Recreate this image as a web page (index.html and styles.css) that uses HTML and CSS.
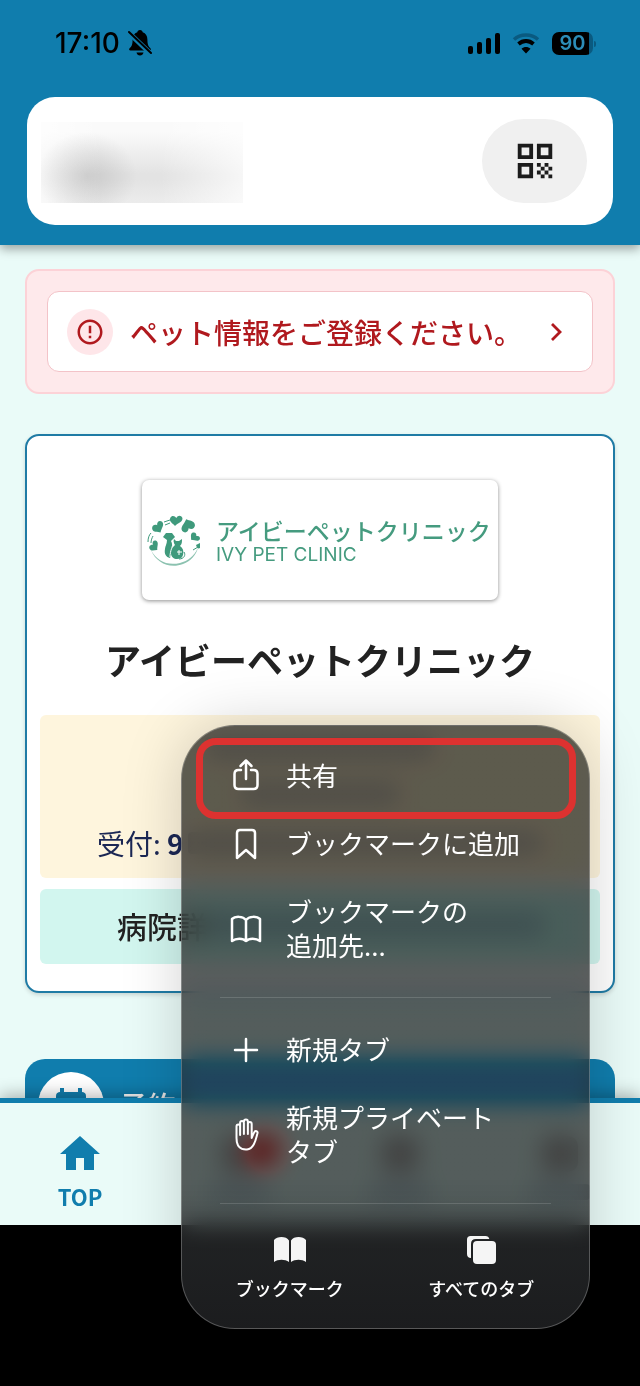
FILE: index.html
```html
<!DOCTYPE html>
<html lang="ja">
<head>
    <meta charset="UTF-8">
    <meta name="viewport" content="width=device-width, initial-scale=1.0">
    <title>アイビーペットクリニック</title>
    <link rel="stylesheet" href="styles.css">
</head>
<body>
    <header class="header">
        <div class="status-bar">
            <div class="status-left">
                <span class="clock">17:10</span>
                <svg width="24" height="28" viewBox="0 0 24 28" aria-hidden="true">
                    <path d="M12 1c1.600 0 2.600 1 2.700 2.300 3.100 1 4.700 3.600 4.700 7.200 0 5.200 1 7 3 8.800.900.900.500 2.200-.900 2.200H2.500c-1.400 0-1.800-1.300-.900-2.200 2-1.800 3-3.600 3-8.800 0-3.600 1.600-6.200 4.700-7.200C9.400 2 10.400 1 12 1zM8.500 23.500h7c-.400 1.900-1.700 3-3.500 3s-3.100-1.100-3.500-3z"/>
                    <path d="M0 3L23 25" stroke="#107dad" stroke-width="5"/>
                    <path d="M1 3L23 24" stroke="#000" stroke-width="2" stroke-linecap="round"/>
                </svg>
            </div>
            <div class="status-right">
                <svg width="32" height="26" viewBox="0 0 32 26" aria-hidden="true">
                    <rect x="0" y="16" width="5" height="8" rx="2"/>
                    <rect x="9" y="12" width="5" height="12" rx="2"/>
                    <rect x="18" y="8" width="5" height="16" rx="2"/>
                    <rect x="27" y="3" width="5" height="21" rx="2"/>
                </svg>
                <svg width="28" height="26" viewBox="0 0 28 26" fill="none" aria-hidden="true">
                    <path d="M2 9.500C8.500 3.500 19.500 3.500 26 9.500" stroke="#0a5a80" stroke-width="3.500"/>
                    <path d="M6.500 14C11 10 17 10 21.500 14" stroke="#000" stroke-width="3.800"/>
                    <path d="M14 23.500l-4.500-4.700c2.500-2.400 6.500-2.400 9 0z" fill="#000"/>
                </svg>
                <span class="battery">90</span>
            </div>
        </div>
        <div class="account">
            <div class="account-name"></div>
            <button class="qr-button" type="button" aria-label="QRコード">
                <svg width="46" height="48" viewBox="0 0 24 24" fill="#1c1c1c">
                    <path d="M3 11h8V3H3v8zm2-6h4v4H5V5zM3 21h8v-8H3v8zm2-6h4v4H5v-4zM13 3v8h8V3h-8zm6 6h-4V5h4v4zM19 19h2v2h-2zM13 13h2v2h-2zM15 15h2v2h-2zM13 17h2v2h-2zM15 19h2v2h-2zM17 17h2v2h-2zM17 13h2v2h-2zM19 15h2v2h-2z"/>
                </svg>
            </button>
        </div>
    </header>

    <main class="main">
        <div class="alert">
            <a class="alert-link" href="#pet">
                <span class="alert-icon">
                    <svg width="30" height="30" viewBox="0 0 24 24" fill="#b0191e">
                        <path d="M11 15h2v2h-2zm0-8h2v6h-2zm1-5C6.500 2 2 6.500 2 12s4.500 10 10 10 10-4.500 10-10S17.500 2 12 2zm0 18c-4.400 0-8-3.600-8-8s3.600-8 8-8 8 3.600 8 8-3.600 8-8 8z"/>
                    </svg>
                </span>
                <span class="alert-text">ペット情報をご登録ください。</span>
                <svg width="24" height="24" viewBox="0 0 24 24" fill="none" stroke="#b0191e" stroke-width="2.800">
                    <path d="M8 4l8 8-8 8"/>
                </svg>
            </a>
        </div>

        <section class="clinic">
            <div class="logo">
                <svg class="logo-mark" width="54" height="54" viewBox="0 0 54 54" fill="#3f9a7c" aria-hidden="true">
                    <defs>
                        <path id="leaf" d="M0 6C-2 4-7 3-6-1c1-3 4-3 6-1 1-3 4-4 6-1 1 4-3 5-6 9z"/>
                    </defs>
                    <path d="M4 36C9 49 23 55 36 50c8-3 13-9 15-16-4 8-10 13-18 15C20 52 10 47 4 36z" opacity=".6"/>
                    <path d="M1 28c0-4 1-7 3-9M17 8l6-2M18 11l5-2M4 29c0-3 1-5 2-7M46 36l5-3" fill="none" stroke="#3f9a7c"/>
                    <use href="#leaf" transform="translate(11 13) rotate(-25)"/>
                    <use href="#leaf" transform="translate(29 6) rotate(10)"/>
                    <use href="#leaf" transform="translate(41 12) rotate(165) scale(1.150)"/>
                    <use href="#leaf" transform="translate(48 23) rotate(55) scale(.800)"/>
                    <use href="#leaf" transform="translate(7 32) rotate(-40) scale(.850)"/>
                    <path d="M49 31l4-2v5c-2 1-3 0-4-3z"/>
                    <path d="M16 23l3-4h6l3 4-4 4c2 4 2 9-1 17-4-1-6-4-5-9 0-3 2-5 2-9z"/>
                    <path d="M27 25l2 2h3l3-2c0 3 0 5-2 7 3 2 4 5 3 9-1 3-3 4-6 4s-6-2-6-6 2-6 4-8c-1-2-2-3-1-6z"/>
                    <path d="M32 45c5 0 7-4 5-7" fill="none" stroke="#3f9a7c"/>
                    <path d="M26 28c0 5-3 8-3 15M32 36v5M30 38h5" fill="none" stroke="#fff"/>
                </svg>
                <div class="logo-text">
                    <span class="logo-ja">アイビーペットクリニック</span>
                    <span class="logo-en">IVY PET CLINIC</span>
                </div>
            </div>
            <h1 class="clinic-name">アイビーペットクリニック</h1>
            <div class="hours">
                <span class="smudge smudge-wide"></span>
                <span class="smudge smudge-short"></span>
                <div class="hours-row">
                    <span>受付: <b>9</b></span>
                    <span class="smudge smudge-fill"></span>
                </div>
            </div>
            <a class="detail-link" href="#detail">
                <span>病院詳</span>
                <span class="smudge smudge-fill"></span>
            </a>
        </section>

        <a class="booking" href="#booking">
            <span class="booking-icon">
                <svg width="30" height="34" viewBox="0 0 30 34" fill="#107dad">
                    <path d="M4 0h4v4h14V0h4v4c2 0 4 1 4 4v22c0 2-1 4-4 4H4c-3 0-4-2-4-4V8c0-3 2-4 4-4z"/>
                    <path d="M4 14h22v15H4z" fill="#fff"/>
                </svg>
            </span>
            <span>予約</span>
        </a>
    </main>

    <nav class="tabs">
        <a class="tab tab-active" href="#top">
            <svg width="48" height="48" viewBox="0 0 24 24" fill="#107dad"><path d="M10 20v-6h4v6h5v-8h3L12 3 2 12h3v8z"/></svg>
            <span>TOP</span>
        </a>
        <div class="tab">
            <span class="tab-blank"><i class="badge"></i></span>
            <span class="smudge tab-label"></span>
        </div>
        <div class="tab">
            <span class="tab-blank"></span>
            <span class="smudge tab-label"></span>
        </div>
        <div class="tab">
            <span class="tab-blank"></span>
            <span class="smudge tab-label"></span>
        </div>
    </nav>

    <!-- browser long-press menu, floats over the page -->
    <div class="menu">
        <button class="menu-item highlighted" type="button">
            <svg width="34" height="34" viewBox="0 0 34 34"><path d="M12 12H9.500C7 12 5.500 13.500 5.500 16v11c0 2.500 1.500 4 4 4h15c2.500 0 4-1.500 4-4V16c0-2.500-1.500-4-4-4H22M17 21V3M11.500 8L17 2.500 22.500 8"/></svg>
            <span>共有</span>
        </button>
        <button class="menu-item" type="button">
            <svg width="34" height="34" viewBox="0 0 34 34"><path d="M8 32V7c0-2 1-3 3-3h12c2 0 3 1 3 3v25l-9-8z"/></svg>
            <span>ブックマークに追加</span>
        </button>
        <button class="menu-item" type="button">
            <svg width="34" height="34" viewBox="0 0 34 34"><path d="M17 9c-3-4-11-4-14-1v22c4-3 11-3 14 0 3-3 10-3 14 0V8c-3-3-11-3-14 1zM17 9v21"/></svg>
            <span>ブックマークの<br>追加先...</span>
        </button>
        <hr class="menu-line">
        <button class="menu-item" type="button">
            <svg width="34" height="34" viewBox="0 0 34 34"><path d="M17 7v22M6 18h22"/></svg>
            <span>新規タブ</span>
        </button>
        <button class="menu-item" type="button">
            <svg class="thin" width="34" height="34" viewBox="0 0 34 34"><path d="M7.500 21V9.500c0-2.600 3.600-2.600 3.600 0V18M11.100 16V6c0-2.700 3.800-2.700 3.800 0v11M14.900 5c0-3.300 4-3.300 4 0v12M18.900 7c0-2.800 3.800-2.800 3.800 0v14c1-2.500 1.700-4.500 2.700-6 1.200-1.700 3.600-.700 3.100 1.300C27 21 25.500 32 18 32.500 11 33 7.500 29 7.500 21"/></svg>
            <span>新規プライベート<br>タブ</span>
        </button>
        <hr class="menu-line">
        <div class="menu-footer">
            <button class="menu-tool" type="button">
                <svg width="34" height="32" viewBox="0 0 34 32"><path d="M16 6.500C13.500 2 4 2 1 6v22c4-3 11-3 15 0zM18 6.500c2.500-4.500 12-4.500 15-.500v22c-4-3-11-3-15 0z"/></svg>
                <span>ブックマーク</span>
            </button>
            <button class="menu-tool" type="button">
                <svg width="34" height="32" viewBox="0 0 34 32"><path d="M6.500 2h15c2 0 3.500 1 3.800 3H12c-3.300 0-5 1.700-5 5v14c-2.500 0-4-1.300-4-4V5.500C3 3.300 4.300 2 6.500 2z"/><rect x="9" y="7" width="23" height="23" rx="4"/></svg>
                <span>すべてのタブ</span>
            </button>
        </div>
    </div>
</body>
</html>
```
FILE: styles.css
```css
* { box-sizing: border-box; }
body {
    position: relative;
    margin: 0;
    min-height: 100vh;
    background: #000;
    font-family: "Noto Sans CJK JP", sans-serif;
    color: #222;
}
a { color: inherit; text-decoration: none; }
button { border: none; background: none; padding: 0; font-family: inherit; color: inherit; cursor: pointer; }
svg { display: block; flex: none; }

/* header */
.header {
    position: relative;
    background: #107dad;
    padding: 0 27px 20px;
    box-shadow: 0 4px 10px rgba(0, 0, 0, 0.35);
}
.status-bar {
    display: flex;
    justify-content: space-between;
    padding: 29px 20px 40px 28px;
    color: #000;
}
.status-left, .status-right { display: flex; align-items: center; height: 28px; }
.status-left { gap: 8px; }
.status-right { gap: 12px; }
.clock { font: 500 28px/28px Inter, sans-serif; }
.battery {
    position: relative;
    width: 41px;
    height: 23px;
    border-radius: 7px;
    background: linear-gradient(90deg, #000 37px, #0a5a80 37px);
    color: #2c8db8;
    font: 600 20px/23px Inter, sans-serif;
    text-align: center;
}
.battery::after {
    content: "";
    position: absolute;
    top: 9px;
    right: -3px;
    width: 2px;
    height: 6px;
    border-radius: 0 2px 2px 0;
    background: #0a5a80;
}
.account {
    display: flex;
    align-items: center;
    justify-content: space-between;
    height: 128px;
    padding: 0 26px 0 14px;
    border-radius: 28px;
    background: #fff;
}
.account-name {
    width: 202px;
    height: 81px;
    margin-top: 3px;
    background:
        radial-gradient(50px 44px at 46px 54px, rgba(0, 0, 0, 0.11), rgba(0, 0, 0, 0.06) 50%, transparent),
        linear-gradient(90deg, rgba(255, 255, 255, 0.7), transparent 60px, transparent 120px, rgba(255, 255, 255, 0.7)),
        linear-gradient(#fafafa, #fafafa 10px, #e3e3e3 52px, #e3e3e3 58px, #ececec);
}
.qr-button {
    display: flex;
    align-items: center;
    justify-content: center;
    width: 105px;
    height: 84px;
    border-radius: 42px;
    background: #f0f0f0;
}

/* page */
.main {
    padding: 24px 25px 0;
    background: #eafbf8;
}
.alert {
    padding: 20px;
    border: 2px solid #fcd2d7;
    border-radius: 14px;
    background: #fee9eb;
}
.alert-link {
    display: flex;
    align-items: center;
    gap: 17px;
    height: 81px;
    padding: 0 24px 0 19px;
    border: 1px solid #f3c3c8;
    border-radius: 12px;
    background: #fff;
}
.alert-icon {
    display: flex;
    align-items: center;
    justify-content: center;
    width: 46px;
    height: 46px;
    border-radius: 50%;
    background: #fee6e9;
}
.alert-text {
    flex: 1;
    color: #b0191e;
    font-size: 28px;
    font-weight: 500;
    line-height: 40px;
    white-space: nowrap;
}

.clinic {
    margin-top: 40px;
    padding: 44px 13px 27px;
    border: 2px solid #1f7ba5;
    border-radius: 14px;
    background: #fff;
    box-shadow: 0 2px 4px rgba(0, 0, 0, 0.15);
}
.logo {
    display: flex;
    align-items: center;
    gap: 15px;
    width: 356px;
    height: 120px;
    margin: 0 auto;
    padding: 2px 0 0 5px;
    border-radius: 7px;
    box-shadow: 0 1px 4px rgba(0, 0, 0, 0.45);
}
.logo-text {
    display: flex;
    flex-direction: column;
    padding-top: 2px;
    color: #459b7f;
    white-space: nowrap;
}
.logo-ja { font-size: 23px; font-weight: 500; line-height: 26px; }
.logo-en { font: 400 19px/24px Inter, sans-serif; }
.clinic-name {
    margin: 35px 0 32px;
    font-size: 36px;
    font-weight: 700;
    line-height: 48px;
    text-align: center;
    white-space: nowrap;
}
.hours {
    display: flex;
    flex-direction: column;
    align-items: center;
    height: 163px;
    padding: 22px 57px 17px;
    border-radius: 6px;
    background: #fef5dd;
    color: #1b2754;
    font-size: 28px;
    line-height: 36px;
}
.hours-row { display: flex; align-items: center; width: 100%; gap: 4px; margin-top: auto; white-space: nowrap; }
.hours-row b { font-weight: 700; }
.detail-link {
    display: flex;
    align-items: center;
    height: 75px;
    margin-top: 11px;
    padding: 0 56px 3px 77px;
    border-radius: 6px;
    background: #d2f6ef;
    font-size: 30px;
    font-weight: 500;
    white-space: nowrap;
}

/* placeholder strokes that sit under the menu glass */
.smudge { height: 22px; border-radius: 4px; background: rgba(20, 30, 60, 0.3); }
.smudge-wide { width: 230px; }
.smudge-short { width: 160px; margin-top: 24px; }
.smudge-fill { flex: 1; }

.booking {
    display: flex;
    align-items: center;
    gap: 16px;
    height: 92px;
    margin-top: 66px;
    padding: 0 13px;
    border-radius: 20px;
    background: #107dad;
    color: #fff;
    font-size: 28px;
    font-weight: 500;
}
.booking-icon {
    display: flex;
    align-items: center;
    justify-content: center;
    width: 66px;
    height: 66px;
    border-radius: 50%;
    background: #fff;
}

/* bottom tabs */
.tabs {
    position: relative;
    display: grid;
    grid-template-columns: repeat(4, 1fr);
    margin-top: -53px;
    padding: 27px 0 17px;
    border-top: 5px solid #107dad;
    background: #eafbf8;
    box-shadow: 0 -3px 16px rgba(0, 0, 0, 0.3);
}
.tab { display: flex; flex-direction: column; align-items: center; gap: 6px; }
.tab-active { color: #107dad; font-size: 22px; font-weight: 700; line-height: 24px; }
.tab-blank { position: relative; width: 36px; height: 36px; margin: 6px; border-radius: 10px; background: #888; }
.tab-label { width: 60px; height: 16px; }
.badge { position: absolute; top: -2px; right: -22px; width: 32px; height: 32px; border-radius: 50%; background: #f01818; }

/* menu */
.menu {
    position: absolute;
    top: 725px;
    left: 181px;
    right: 50px;
    height: 604px;
    padding: 16px 0 0;
    border: 1px solid rgba(255, 255, 255, 0.25);
    border-radius: 54px;
    background: linear-gradient(rgba(42, 42, 42, 0.76) 75%, rgba(38, 40, 42, 0.82) 88%, rgba(32, 33, 35, 0.86));
    backdrop-filter: blur(12px) saturate(2.4);
    box-shadow: 0 0 60px rgba(0, 0, 0, 0.18);
    color: #fff;
}
.menu-item {
    position: relative;
    display: flex;
    align-items: center;
    gap: 23px;
    width: 100%;
    padding: 16px 20px 18px 47px;
    font-size: 26px;
    line-height: 34px;
    text-align: left;
    white-space: nowrap;
}
.menu-item svg { fill: none; stroke: #fff; stroke-width: 2.5; stroke-linecap: round; stroke-linejoin: round; }
.menu-item .thin { stroke-width: 2; }
.highlighted::after {
    content: "";
    position: absolute;
    inset: -4px 13px -9px 14px;
    border: 7px solid #dd3230;
    border-radius: 20px;
}
.menu-line {
    height: 1px;
    margin: 17px 38px 18px;
    border: none;
    background: rgba(255, 255, 255, 0.14);
}
.menu-footer { display: grid; grid-template-columns: 1fr 1fr; padding: 12px 12px 0; }
.menu-tool {
    display: flex;
    flex-direction: column;
    align-items: center;
    gap: 9px;
    font-size: 18px;
    font-weight: 500;
    line-height: 26px;
    white-space: nowrap;
}
.menu-tool svg { fill: #f5f5f5; }
```
